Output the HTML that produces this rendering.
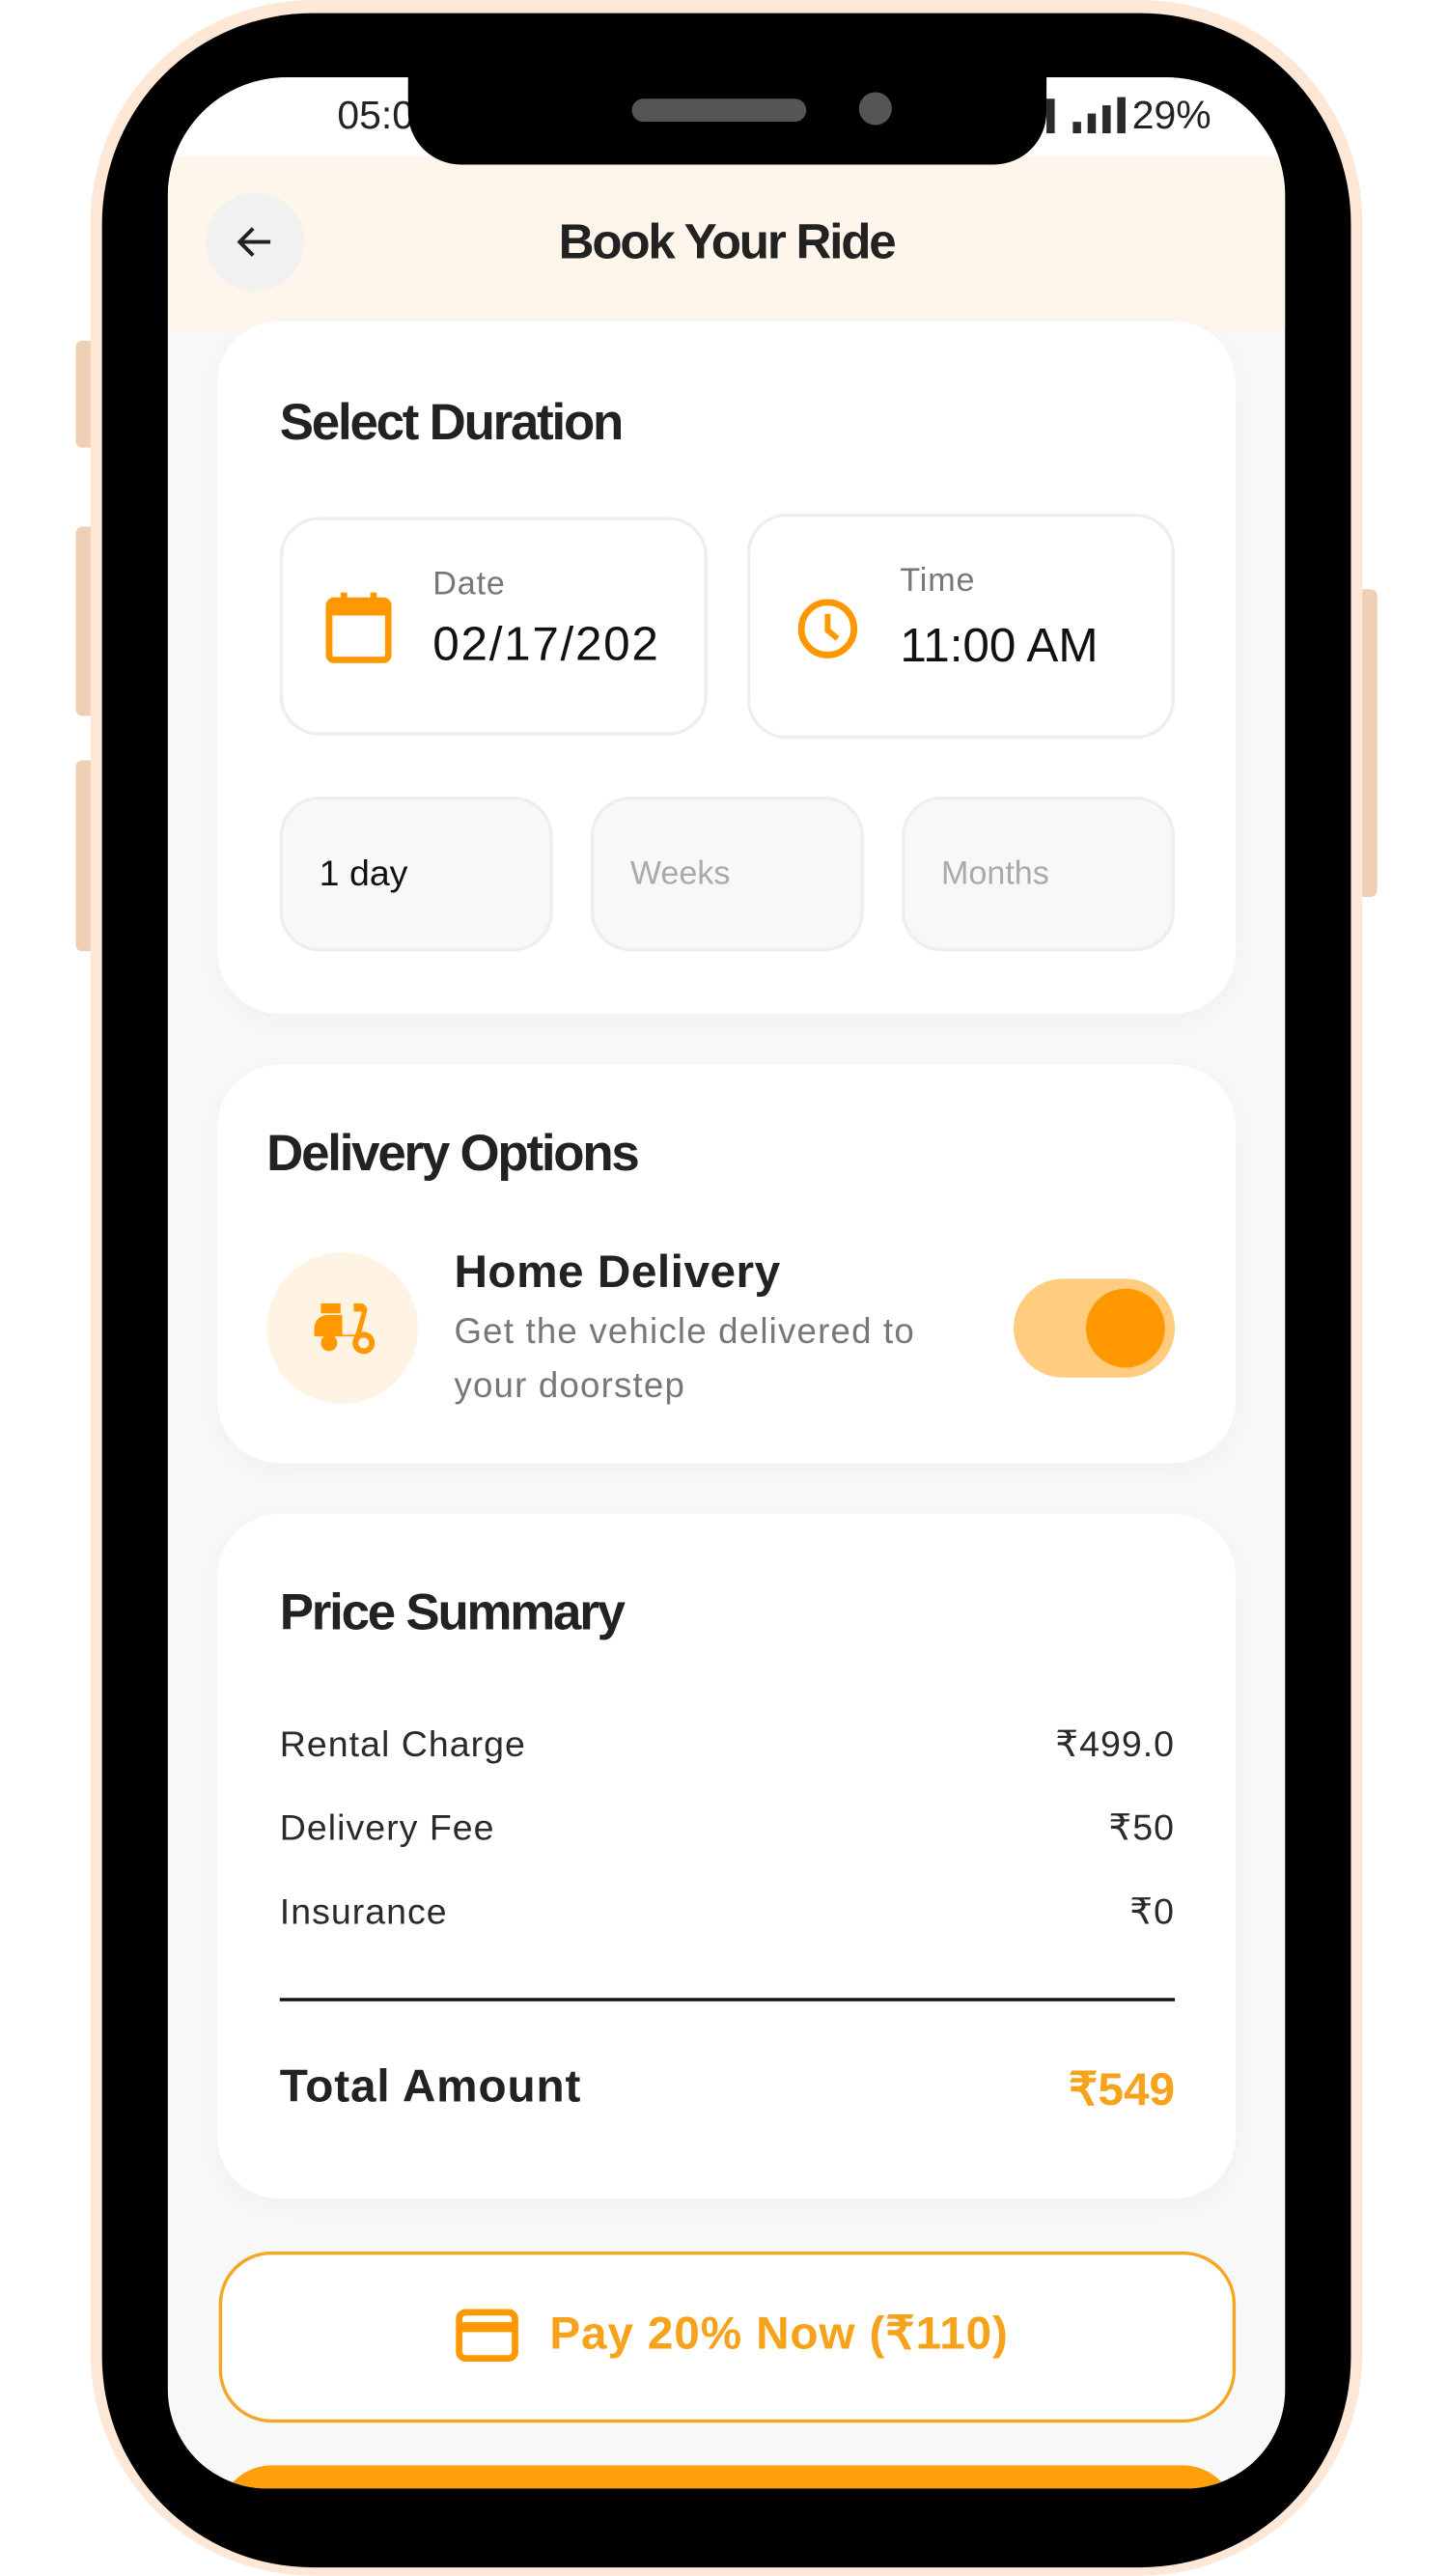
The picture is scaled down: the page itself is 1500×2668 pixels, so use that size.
<!DOCTYPE html>
<html><head><meta charset="utf-8">
<style>
html,body{margin:0;padding:0;width:1500px;height:2660px;overflow:hidden;background:#fff;}
#w{position:absolute;left:0;top:0;width:880px;height:1561px;transform:scale(1.70455);transform-origin:0 0;font-family:"Liberation Sans",sans-serif;}
.a{position:absolute;}
.btn{background:#f0d0b5;border-radius:4px;}
.card{background:#fff;border-radius:38px;box-shadow:0 4px 14px rgba(0,0,0,0.035);}
.h{font-weight:bold;color:#222;letter-spacing:-1.3px;}
.box{border:2px solid #eeeeee;border-radius:24px;background:#fff;box-sizing:border-box;}
.chip{border:2px solid #eeeeee;border-radius:24px;background:#f8f8f8;box-sizing:border-box;font-size:22px;}
.row{font-size:22px;color:#2a2a2a;letter-spacing:0.6px;}
</style></head><body>
<div id="w">
<div class="a btn" style="left:46px;top:207px;width:14px;height:65px"></div>
<div class="a btn" style="left:46px;top:320px;width:14px;height:115px"></div>
<div class="a btn" style="left:46px;top:462px;width:14px;height:116px"></div>
<div class="a btn" style="left:823px;top:358px;width:14px;height:187px"></div>
<div class="a" style="left:55px;top:0;width:773px;height:1565px;background:#fde8d8;border-radius:135px"></div>
<div class="a" style="left:62px;top:8px;width:759px;height:1552px;background:#000;border-radius:128px"></div>
<div class="a" style="left:102px;top:47px;width:679px;height:1465px;background:#f8f8f8;border-radius:72px 72px 60px 60px;overflow:hidden">
  <div class="a" style="left:0;top:0;width:679px;height:48px;background:#fff"></div>
  <div class="a" style="left:103px;top:10px;font-size:24px;color:#222">05:0</div>
  <div class="a" style="left:534px;top:13px;width:5px;height:21px;background:#2a2a2a"></div>
  <div class="a" style="left:550px;top:27px;width:5px;height:7px;background:#2a2a2a"></div>
  <div class="a" style="left:559px;top:22px;width:5px;height:12px;background:#2a2a2a"></div>
  <div class="a" style="left:568px;top:17px;width:5px;height:17px;background:#2a2a2a"></div>
  <div class="a" style="left:577px;top:12px;width:5px;height:22px;background:#2a2a2a"></div>
  <div class="a" style="left:586px;top:10px;font-size:24px;color:#222">29%</div>
  <div class="a" style="left:0;top:48px;width:679px;height:105px;background:#fff6eb"></div>
  <div class="a" style="left:23px;top:70px;width:60px;height:60px;border-radius:50%;background:#f1f1f1"></div>
  <svg class="a" style="left:39px;top:86px" width="28" height="28" viewBox="0 0 24 24"><path d="M20 12H5M11 5l-7 7 7 7" fill="none" stroke="#222" stroke-width="2"/></svg>
  <div class="a h" style="left:0;width:679px;text-align:center;top:84px;font-size:30px">Book Your Ride</div>

  <div class="a card" style="left:30px;top:148px;width:619px;height:421px">
    <div class="a h" style="left:38px;top:44px;font-size:31px">Select Duration</div>
    <div class="a box" style="left:38px;top:119px;width:260px;height:133px">
      <svg class="a" style="left:26px;top:43px" width="40" height="44" viewBox="0 0 40 44"><rect x="2" y="6" width="36" height="36" rx="3" fill="none" stroke="#ff9800" stroke-width="4"/><rect x="2" y="6" width="36" height="9" fill="#ff9800"/><rect x="9" y="1" width="4" height="8" fill="#ff9800"/><rect x="27" y="1" width="4" height="8" fill="#ff9800"/></svg>
      <div class="a" style="left:91px;top:28px;font-size:20px;color:#777;letter-spacing:0.5px">Date</div>
      <div class="a" style="left:91px;top:60px;font-size:29px;color:#111;letter-spacing:1px">02/17/202</div>
    </div>
    <div class="a box" style="left:322px;top:117px;width:260px;height:137px">
      <svg class="a" style="left:27px;top:48px" width="40" height="40" viewBox="0 0 40 40"><circle cx="20" cy="20" r="16" fill="none" stroke="#ff9800" stroke-width="4"/><path d="M20 11v10l6 5" fill="none" stroke="#ff9800" stroke-width="3.5"/></svg>
      <div class="a" style="left:91px;top:28px;font-size:20px;color:#777;letter-spacing:0.5px">Time</div>
      <div class="a" style="left:91px;top:63px;font-size:29px;color:#111">11:00 AM</div>
    </div>
    <div class="a chip" style="left:38px;top:289px;width:166px;height:94px"><span class="a" style="left:22px;top:32px;color:#111">1 day</span></div>
    <div class="a chip" style="left:227px;top:289px;width:166px;height:94px"><span class="a" style="left:22px;top:34px;color:#aaa;font-size:20px">Weeks</span></div>
    <div class="a chip" style="left:416px;top:289px;width:166px;height:94px"><span class="a" style="left:22px;top:34px;color:#aaa;font-size:20px">Months</span></div>
  </div>

  <div class="a card" style="left:30px;top:600px;width:619px;height:242px">
    <div class="a h" style="left:30px;top:36px;font-size:31px">Delivery Options</div>
    <div class="a" style="left:30px;top:114px;width:92px;height:92px;border-radius:50%;background:#fff4e3"></div>
    <svg class="a" style="left:56px;top:143px" width="40" height="34" viewBox="0 0 40 34"><rect x="7" y="2" width="12" height="6" fill="#ff9800"/><path d="M3 26v-9a8 8 0 0 1 8-8h9v12h8l4-14h-5v-5h4a4 4 0 0 1 4 5l-4 15H3z" fill="#ff9800"/><circle cx="12" cy="26" r="5" fill="#ff9800"/><circle cx="33" cy="26" r="5" fill="none" stroke="#ff9800" stroke-width="3.5"/></svg>
    <div class="a" style="left:144px;top:110px;font-size:28px;font-weight:bold;color:#222;letter-spacing:0.3px">Home Delivery</div>
    <div class="a" style="left:144px;top:146px;font-size:21.5px;color:#777;line-height:33px;letter-spacing:0.7px">Get the vehicle delivered to<br>your doorstep</div>
    <div class="a" style="left:484px;top:130px;width:98px;height:60px;border-radius:30px;background:#ffcc80"></div>
    <div class="a" style="left:528px;top:136px;width:48px;height:48px;border-radius:50%;background:#ff9800"></div>
  </div>

  <div class="a card" style="left:30px;top:873px;width:619px;height:416px">
    <div class="a h" style="left:38px;top:42px;font-size:31px">Price Summary</div>
    <div class="a row" style="left:38px;top:127px">Rental Charge</div><div class="a row" style="right:37px;top:127px">₹499.0</div>
    <div class="a row" style="left:38px;top:178px">Delivery Fee</div><div class="a row" style="right:37px;top:178px">₹50</div>
    <div class="a row" style="left:38px;top:229px">Insurance</div><div class="a row" style="right:37px;top:229px">₹0</div>
    <div class="a" style="left:38px;top:294px;width:544px;height:2px;background:#111"></div>
    <div class="a" style="left:38px;top:332px;font-size:28px;font-weight:bold;color:#222;letter-spacing:0.5px">Total Amount</div>
    <div class="a" style="right:37px;top:333px;font-size:28px;font-weight:bold;color:#f7a21b">₹549</div>
  </div>

  <div class="a" style="left:31px;top:1321px;width:618px;height:104px;border:2px solid #f5a623;border-radius:32px;box-sizing:border-box;background:#fff"></div>
  <svg class="a" style="left:175px;top:1356px" width="38" height="32" viewBox="0 0 38 32"><rect x="2" y="2" width="34" height="28" rx="4" fill="none" stroke="#ff9800" stroke-width="4"/><rect x="2" y="8" width="34" height="6" fill="#ff9800"/></svg>
  <div class="a" style="left:232px;top:1354px;font-size:28px;font-weight:bold;color:#f7a21b;letter-spacing:0.5px">Pay 20% Now (₹110)</div>
  <div class="a" style="left:31px;top:1451px;width:618px;height:80px;border-radius:32px;background:#ff9f0a"></div>
</div>
<div class="a" style="left:248px;top:40px;width:388px;height:60px;background:#000;border-radius:0 0 32px 32px"></div>
<div class="a" style="left:384px;top:60px;width:106px;height:14px;border-radius:7px;background:#555"></div>
<div class="a" style="left:522px;top:56px;width:20px;height:20px;border-radius:50%;background:#555"></div>
</div>
</body></html>
